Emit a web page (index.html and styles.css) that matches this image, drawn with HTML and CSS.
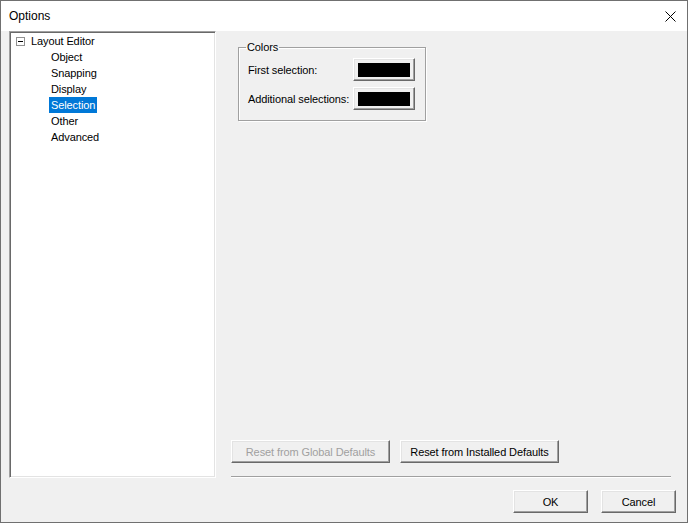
FILE: index.html
```html
<!DOCTYPE html>
<html lang="en">
<head>
	<meta charset="UTF-8">
	<title>Options</title>
	<link rel="stylesheet" href="styles.css">
</head>
<body>
	<div class="window">
		<div class="titlebar">
			<span class="title">Options</span>
			<span class="close">
				<svg width="11" height="11" viewBox="0 0 11 11">
					<path d="M0.5 0.5 L10.5 10.5 M10.5 0.5 L0.5 10.5" stroke="#000" stroke-width="1" fill="none"/>
				</svg>
			</span>
		</div>

		<div class="content">
			<div class="tree">
				<div class="node root">
					<span class="expander"></span>
					<span class="label">Layout Editor</span>
				</div>
				<div class="node child"><span class="label">Object</span></div>
				<div class="node child"><span class="label">Snapping</span></div>
				<div class="node child"><span class="label">Display</span></div>
				<div class="node child"><span class="label selected">Selection</span></div>
				<div class="node child"><span class="label">Other</span></div>
				<div class="node child"><span class="label">Advanced</span></div>
			</div>

			<div class="panel">
				<fieldset class="group">
					<legend>Colors</legend>
					<div class="color-rows">
						<span class="row-label">First selection:</span>
						<button class="btn swatch-btn"><span class="swatch"></span></button>
						<span class="row-label">Additional selections:</span>
						<button class="btn swatch-btn"><span class="swatch"></span></button>
					</div>
				</fieldset>

				<div class="reset-row">
					<button class="btn reset" disabled>Reset from Global Defaults</button>
					<button class="btn reset">Reset from Installed Defaults</button>
				</div>
				<div class="separator"></div>
			</div>
		</div>

		<div class="footer">
			<button class="btn dialog-btn">OK</button>
			<button class="btn dialog-btn">Cancel</button>
		</div>
	</div>
</body>
</html>
```

FILE: styles.css
```css
body {
	margin: 0;
	font-family: "Liberation Sans", Arial, sans-serif;
	font-size: 11px;
	letter-spacing: -0.1px;
	color: #000;
}

.window {
	width: 688px;
	height: 523px;
	box-sizing: border-box;
	border: 1px solid #707070;
	background: #f0f0f0;
	display: flex;
	flex-direction: column;
}

.titlebar {
	height: 30px;
	background: #fff;
	display: flex;
	align-items: center;
	justify-content: space-between;
	padding-left: 8px;
	padding-right: 10px;
	flex-shrink: 0;
}
.title {
	font-size: 12px;
	letter-spacing: 0;
}
.close {
	display: flex;
	width: 11px;
	height: 11px;
	margin-right: 1px;
}

.content {
	display: flex;
	height: 447px;
	padding-left: 8px;
	padding-right: 16px;
	flex-shrink: 0;
}

/* sunken tree view */
.tree {
	width: 207px;
	box-sizing: border-box;
	background: #fff;
	border: 1px solid;
	border-color: #a0a0a0 #fff #fff #a0a0a0;
	box-shadow: inset 1px 1px #696969, inset -1px -1px #e3e3e3;
	padding: 1px 0 0 1px;
}
.node {
	height: 16px;
	display: flex;
	align-items: center;
	white-space: nowrap;
}
.root {
	padding-left: 5px;
}
.expander {
	width: 9px;
	height: 9px;
	box-sizing: border-box;
	border: 1px solid #919191;
	position: relative;
	margin-right: 6px;
}
.expander::after {
	content: "";
	position: absolute;
	left: 1px;
	top: 3px;
	width: 5px;
	height: 1px;
	background: #000;
}
.child {
	padding-left: 38px;
}
.label {
	padding: 0 2px;
	line-height: 16px;
}
.root .label {
	padding: 0;
}
.selected {
	background: #0078d7;
	color: #fff;
}

.panel {
	flex: 1;
	margin-left: 15px;
	display: flex;
	flex-direction: column;
}

.group {
	align-self: flex-start;
	margin: 10px 0 0 7px;
	padding: 0 10px 10px 9px;
	border: 1px solid #a0a0a0;
	box-shadow: 1px 1px #fff, inset 1px 1px #fff;
}
.group legend {
	padding: 0 1px;
	margin-left: -2px;
	line-height: 13px;
}
.color-rows {
	display: grid;
	grid-template-columns: auto 62px;
	column-gap: 4px;
	row-gap: 6px;
	align-items: center;
	margin-top: 4px;
}

/* classic 3d buttons */
.btn {
	font-family: inherit;
	font-size: 11px;
	letter-spacing: inherit;
	color: #000;
	background: #f0f0f0;
	border: 1px solid;
	border-color: #fff #696969 #696969 #fff;
	box-shadow: inset -1px -1px #a0a0a0, inset 1px 1px #e3e3e3;
	padding: 0;
	margin: 0;
	height: 23px;
	box-sizing: border-box;
}
.btn:disabled {
	color: #a0a0a0;
}
.swatch-btn {
	width: 62px;
	display: flex;
	align-items: center;
	justify-content: center;
}
.swatch {
	width: 52px;
	height: 14px;
	background: #000;
}

.reset-row {
	margin-top: auto;
	display: flex;
	gap: 10px;
}
.reset {
	width: 159px;
}
.separator {
	margin-top: 13px;
	border-top: 1px solid #a0a0a0;
	border-bottom: 1px solid #fff;
}

.footer {
	display: flex;
	justify-content: flex-end;
	gap: 13px;
	padding: 12px 11px 0 0;
}
.dialog-btn {
	width: 75px;
}
```
